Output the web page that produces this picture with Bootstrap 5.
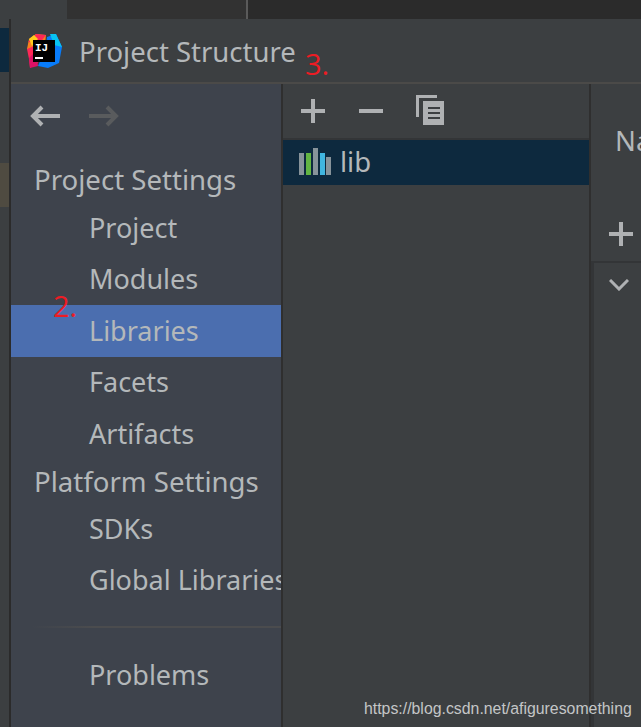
<!DOCTYPE html>
<html lang="en">
<head>
  <meta charset="UTF-8" />
  <title>Project Structure</title>
  <link href="https://cdn.jsdelivr.net/npm/bootstrap@5.3.0/dist/css/bootstrap.min.css" rel="stylesheet" />
  <style>
    html, body { height: 727px; overflow: hidden; }
    body { background: #3c3f41; font-family: "Noto Sans", sans-serif; color: #b4b8ba; }
    .top-strip { height: 19px; background: #2b2b2b; }
    .top-a { width: 67px; background: #3c3f41; }
    .top-b { width: 181px; background: #323232; border-right: 2px solid #5a5a5a; }
    .main-area { height: 708px; }
    .edge { width: 9px; background: #3c3f41; }
    .edge-navy { height: 44px; margin-top: 9px; background: #0d293e; }
    .edge-olive { height: 44px; margin-top: 91px; background: #4f4b41; }
    .dlg { border-left: 2px solid #2b2b2b; min-width: 0; }
    .dlg-title { height: 65px; padding-left: 15px; gap: 17px; border-bottom: 2px solid #4b4a48; font-size: 27.5px; }
    .dlg-name { margin-top: 3px; }
    .side { width: 272px; background: #3e434c; border-right: 2px solid #2f2f2f; overflow: hidden; }
    .nav-arrows { height: 72px; padding: 0 0 8px 18px; gap: 29px; }
    .nav-head { height: 46px; padding: 1px 0 0 23px; font-size: 27.6px; white-space: nowrap; }
    .nav-head.second { height: 43px; padding-top: 1px; }
    .nav-row { height: 51.6px; padding-left: 78px; font-size: 27px; white-space: nowrap; }
    .nav-row.on { background: #4b6eaf; }
    .nav-rule { height: 2px; margin: 20px 0 21px 20px; background: linear-gradient(90deg, #3e434c, #4b4c4e 25%); }
    .mid { width: 308px; border-right: 2px solid #2f2f2f; }
    .mid-tools { height: 56px; padding-left: 18px; gap: 34px; border-bottom: 2px solid #333537; }
    .copy-ico { margin: -2px 0 0 -1px; }
    .lib-row { height: 45px; background: #0d293e; padding: 0 0 2px 16px; gap: 9px; font-size: 27.5px; }
    .lib-ico { margin-top: -1px; }
    .right-pane { min-width: 0; overflow: hidden; }
    .name-area { height: 179px; padding: 36px 0 0 24px; font-size: 27.5px; border-bottom: 2px solid #333537; }
    .name-tools { padding-top: 61px; padding-left: 18px; margin-left: -24px; }
    .tree-pane { border-left: 3px solid #333537; padding: 16px 0 0 15px; }
    .note { position: absolute; color: #ed1c24; font-family: "Open Sans", sans-serif; font-size: 29px; line-height: 1; }
    .note-3 { left: 305px; top: 49px; }
    .note-2 { left: 53px; top: 291px; }
    .mark-url { position: absolute; left: 364px; top: 699px; font-family: "Liberation Sans", sans-serif; font-size: 15.85px; line-height: 1.2; color: #c4c6c7; }
  </style>
</head>
<body class="position-relative">
  <div class="top-strip d-flex">
    <div class="top-a"></div>
    <div class="top-b"></div>
  </div>
  <div class="main-area d-flex">
    <div class="edge flex-shrink-0">
      <div class="edge-navy"></div>
      <div class="edge-olive"></div>
    </div>
    <div class="dlg flex-grow-1 d-flex flex-column">
      <div class="dlg-title d-flex align-items-center">
        <svg width="36" height="36" viewBox="0 0 36 36">
          <polygon points="3,6 10,1 20,2 18,20 1,16" fill="#fc801d"/>
          <polygon points="10,1 20,2 14,10 2,9" fill="#fe2857"/>
          <polygon points="3,6 8,2 12,6 6,13" fill="#ffcc1c"/>
          <polygon points="1,16 8,13 14,28 4,35 3,26" fill="#fe2857"/>
          <polygon points="3,25 10,18 12,33 4,35" fill="#dd1265"/>
          <polygon points="21,4 30,1 36,14 33,30 22,35 12,33 20,14" fill="#087cfa"/>
          <polygon points="24,1 30,1 36,14 28,12" fill="#07c3f2"/>
          <rect x="7" y="7" width="22" height="22" fill="#000"/>
          <rect x="9" y="24" width="8" height="2" fill="#fff"/>
          <text x="9" y="18" font-family="Liberation Mono, monospace" font-size="11" font-weight="700" fill="#fff">IJ</text>
        </svg>
        <span class="dlg-name">Project Structure</span>
      </div>
      <div class="d-flex flex-grow-1">
        <div class="side flex-shrink-0">
          <div class="nav-arrows d-flex align-items-center">
            <svg width="31" height="22" viewBox="0 0 31 22" fill="none" stroke="#afb1b3" stroke-width="4"><path d="M31 11H4M13 2L4 11l9 9"/></svg>
            <svg width="31" height="22" viewBox="0 0 31 22" fill="none" stroke="#595b5d" stroke-width="4"><path d="M0 11h27M18 2l9 9-9 9"/></svg>
          </div>
          <div class="nav-head d-flex align-items-center">Project Settings</div>
          <div class="nav-row d-flex align-items-center">Project</div>
          <div class="nav-row d-flex align-items-center">Modules</div>
          <div class="nav-row on d-flex align-items-center">Libraries</div>
          <div class="nav-row d-flex align-items-center">Facets</div>
          <div class="nav-row d-flex align-items-center">Artifacts</div>
          <div class="nav-head second d-flex align-items-center">Platform Settings</div>
          <div class="nav-row d-flex align-items-center">SDKs</div>
          <div class="nav-row d-flex align-items-center">Global Libraries</div>
          <div class="nav-rule"></div>
          <div class="nav-row d-flex align-items-center">Problems</div>
        </div>
        <div class="mid flex-shrink-0">
          <div class="mid-tools d-flex align-items-center">
            <svg width="24" height="24" viewBox="0 0 24 24" fill="#afb1b3"><path d="M10 0h4v10h10v4H14v10h-4V14H0v-4h10z"/></svg>
            <svg width="24" height="24" viewBox="0 0 24 24" fill="#afb1b3"><rect y="10" width="24" height="4"/></svg>
            <svg class="copy-ico" width="28" height="30" viewBox="0 0 28 30" fill="#afb1b3"><path d="M0 0h21v3H3v19H0z"/><path fill-rule="evenodd" d="M7 6h21v24H7zM12 12v2h12v-2zM12 17v2h12v-2zM12 22v2h12v-2z"/></svg>
          </div>
          <div class="lib-row d-flex align-items-center">
            <svg class="lib-ico" width="32" height="27" viewBox="0 0 32 27">
              <rect x="0" y="5" width="5" height="22" fill="#87939a"/>
              <rect x="7" y="5" width="5" height="22" fill="#62b543"/>
              <rect x="14" y="0" width="5" height="27" fill="#87939a"/>
              <rect x="21" y="5" width="5" height="22" fill="#40b6e0"/>
              <rect x="27" y="9" width="5" height="18" fill="#87939a"/>
            </svg>
            <span>lib</span>
          </div>
        </div>
        <div class="right-pane flex-grow-1 d-flex flex-column">
          <div class="name-area">
            <div>Name</div>
            <div class="name-tools">
              <svg class="d-block" width="24" height="24" viewBox="0 0 24 24" fill="#afb1b3"><path d="M10 0h4v10h10v4H14v10h-4V14H0v-4h10z"/></svg>
            </div>
          </div>
          <div class="tree-pane flex-grow-1">
            <svg class="d-block" width="20" height="12" viewBox="0 0 20 12" fill="none" stroke="#afb1b3" stroke-width="3"><path d="M1 1l9 9 9-9"/></svg>
          </div>
        </div>
      </div>
    </div>
  </div>
  <span class="note note-3">3.</span>
  <span class="note note-2">2.</span>
  <span class="mark-url">https://blog.csdn.net/afiguresomething</span>
  <script src="https://cdn.jsdelivr.net/npm/bootstrap@5.3.0/dist/js/bootstrap.bundle.min.js"></script>
</body>
</html>
